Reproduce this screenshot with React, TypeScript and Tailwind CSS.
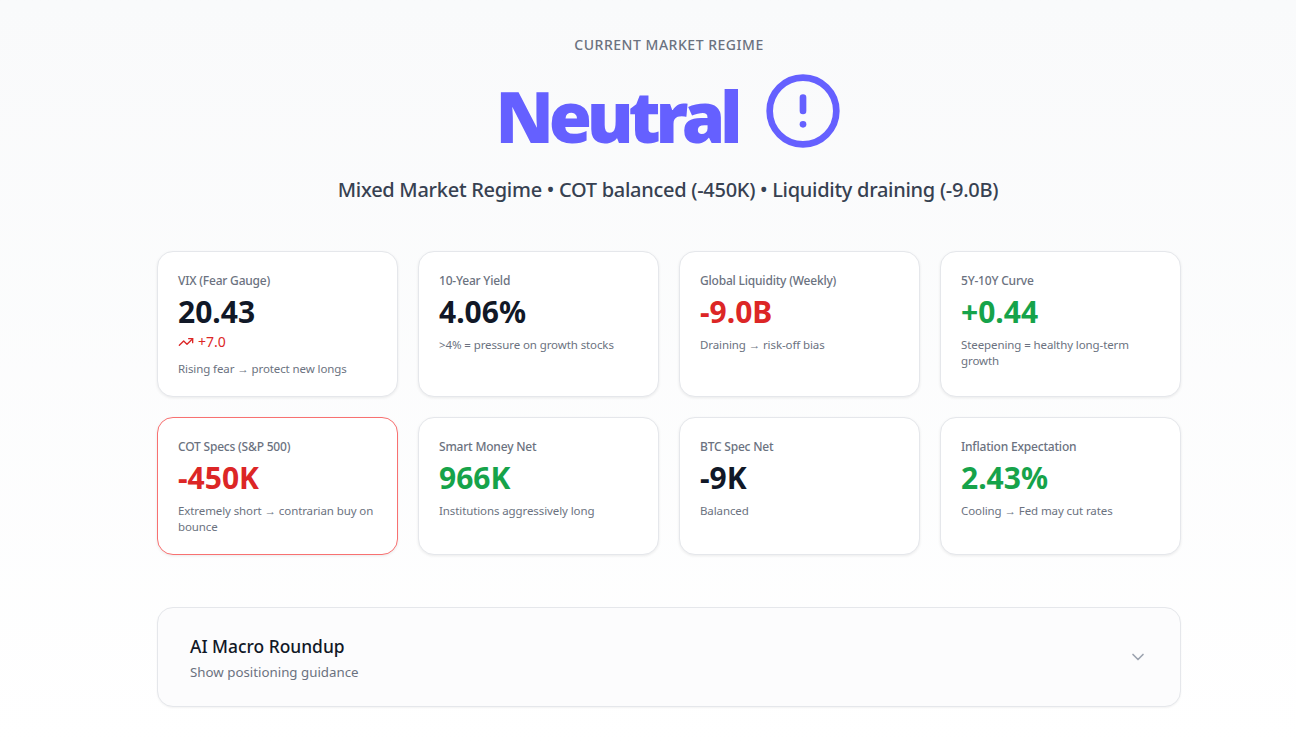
import { AlertCircle, ChevronDown, TrendingUp } from "lucide-react";

const font = "font-['Noto_Sans',sans-serif]";

type CardProps = {
  label: string;
  value: string;
  tone?: string;
  note: string;
  delta?: boolean;
  border?: string;
};

function Card({ label, value, tone = "text-[#111827]", note, delta, border = "border-[#e5e7eb]" }: CardProps) {
  return (
    <div className={`rounded-2xl border bg-white px-5 pt-[19px] pb-[19px] shadow-[0_1px_3px_rgba(0,0,0,0.08)] ${border}`}>
      <div className="text-[12px] leading-[20px] font-medium text-[#6b7280] tracking-[-0.2px]">{label}</div>
      <div className={`text-[30px] leading-[36px] mt-[3px] font-bold ${tone}`}>{value}</div>
      {delta && (
        <div className="mt-[2px] flex items-center gap-1 text-[14px] leading-[20px] text-[#dc2626]">
          <TrendingUp size={16} strokeWidth={2} />
          <span>+7.0</span>
        </div>
      )}
      <div className={`${delta ? "mt-[9px]" : "mt-[7px]"} text-[11.5px] leading-[16px] text-[#6b7280] tracking-[-0.1px]`}>{note}</div>
    </div>
  );
}

export default function App() {
  return (
    <div className={`min-h-[747px] bg-gradient-to-b from-[#f9fafb] to-white pl-[42px] ${font}`}>
      <div className="h-[231px] pt-[36px] text-center">
        <div className="text-[14px] leading-[18px] font-medium tracking-[0.52px] text-[#6b7280]">CURRENT MARKET REGIME</div>
        <div className="mt-[12px] flex items-center justify-center gap-[25px]">
          <span className="pt-[5px] text-[70px] leading-[90px] font-black tracking-[-5.2px] text-[#6560ff]">Neutral</span>
          <AlertCircle size={80} strokeWidth={2} className="mb-[5px] text-[#6560ff]" />
        </div>
        <div className="mt-[15px] pr-[2px] text-[20px] leading-[28px] font-medium text-[#374151] tracking-[-0.28px]">
          Mixed Market Regime • COT balanced (-450K) • Liquidity draining (-9.0B)
        </div>
      </div>
      <div className="mx-auto w-[1024px] pt-[20px]">
        <div className="grid grid-cols-4 gap-5">
          <Card label="VIX (Fear Gauge)" value="20.43" delta note="Rising fear → protect new longs" />
          <Card label="10-Year Yield" value="4.06%" note=">4% = pressure on growth stocks" />
          <Card label="Global Liquidity (Weekly)" value="-9.0B" tone="text-[#dc2626]" note="Draining → risk-off bias" />
          <Card label="5Y-10Y Curve" value="+0.44" tone="text-[#16a34a]" note="Steepening = healthy long-term growth" />
          <Card label="COT Specs (S&P 500)" value="-450K" tone="text-[#dc2626]" border="border-[#f87171]" note="Extremely short → contrarian buy on bounce" />
          <Card label="Smart Money Net" value="966K" tone="text-[#16a34a]" note="Institutions aggressively long" />
          <Card label="BTC Spec Net" value="-9K" note="Balanced" />
          <Card label="Inflation Expectation" value="2.43%" tone="text-[#16a34a]" note="Cooling → Fed may cut rates" />
        </div>
        <div className="mt-[52px] flex h-[100px] items-center justify-between rounded-2xl border border-[#e5e7eb] bg-[#fcfcfd] px-8 shadow-[0_1px_2px_rgba(0,0,0,0.05)]">
          <div>
            <div className="text-[17.4px] leading-[26px] font-medium text-[#111827]">AI Macro Roundup</div>
            <div className="mt-[3px] text-[13.3px] leading-[20px] text-[#6b7280]">Show positioning guidance</div>
          </div>
          <ChevronDown size={20} className="text-[#9ca3af]" />
        </div>
      </div>
    </div>
  );
}
